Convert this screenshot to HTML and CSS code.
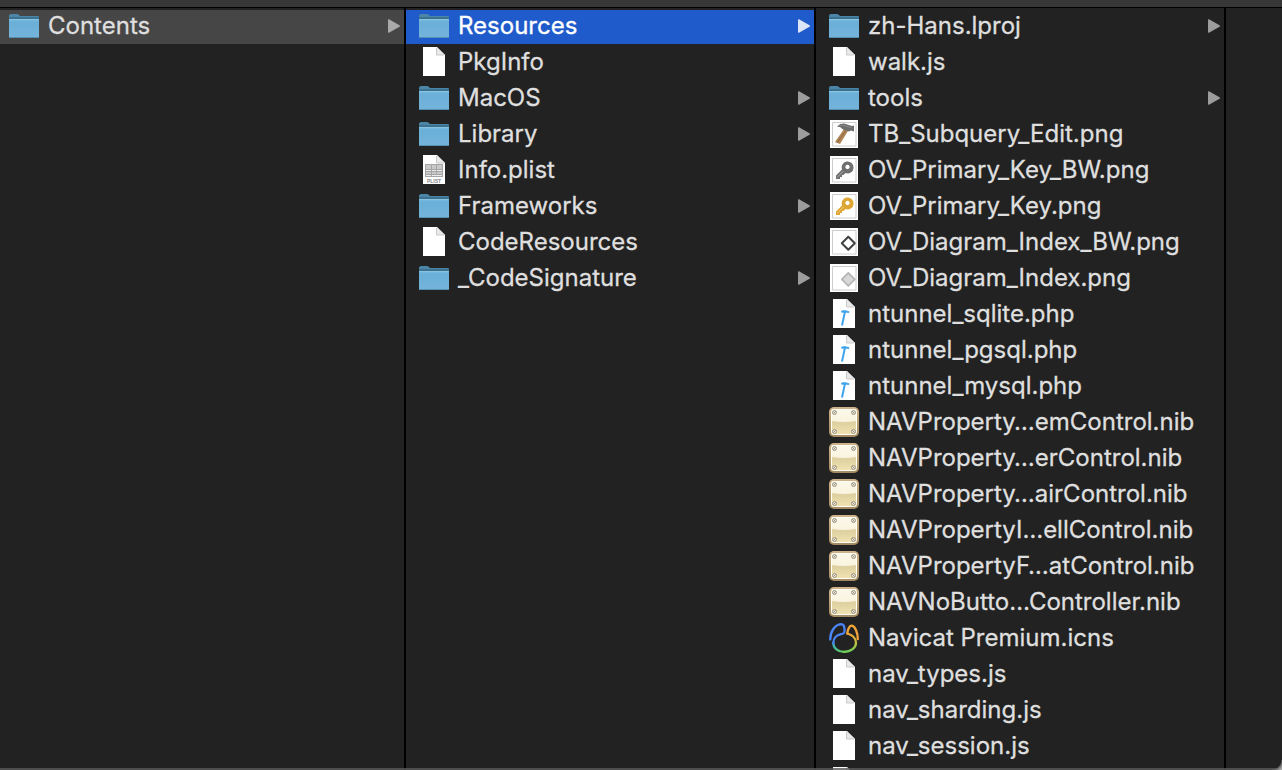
FILE: index.html
```
<!DOCTYPE html>
<html lang="en">
<head>
<meta charset="utf-8">
<title>Contents</title>
<link rel="stylesheet" href="styles.css">
</head>
<body>
<svg class="sprite" aria-hidden="true">
  <defs>
    <linearGradient id="g-folder" x1="0" y1="0" x2="0" y2="1"><stop offset="0" stop-color="#7fc0e3"/><stop offset="0.15" stop-color="#69afd8"/><stop offset="1" stop-color="#75b4da"/></linearGradient>
    <linearGradient id="g-nib" x1="0" y1="0" x2="0" y2="1"><stop offset="0" stop-color="#fffdf4"/><stop offset="0.45" stop-color="#f3ecd0"/><stop offset="0.5" stop-color="#ddcf9f"/><stop offset="1" stop-color="#f1e4b2"/></linearGradient>
    <linearGradient id="g-rim" x1="0" y1="0" x2="0" y2="1"><stop offset="0" stop-color="#d0b48a"/><stop offset="1" stop-color="#a38a62"/></linearGradient>
    <linearGradient id="g-ring" gradientUnits="userSpaceOnUse" x1="8" y1="12" x2="16" y2="29"><stop offset="0" stop-color="#4a86f7"/><stop offset="0.55" stop-color="#3fb8a0"/><stop offset="1" stop-color="#6fd058"/></linearGradient>
    <linearGradient id="g-ringr" gradientUnits="userSpaceOnUse" x1="24" y1="11" x2="20" y2="28"><stop offset="0" stop-color="#f0a63a"/><stop offset="0.4" stop-color="#c9c040"/><stop offset="1" stop-color="#6fd058"/></linearGradient>
  </defs>
  <symbol id="folder" viewBox="0 0 30 30">
    <path d="M0 26V5q0-2 2-2h6q1 0 2 1l1 1h18q1 0 1 1v20z" fill="#4b86a8"/>
    <path d="M0 7h30" stroke="#315d78"/>
    <path d="M0 8h30v18q0 1-1 1H1q-1 0-1-1z" fill="url(#g-folder)"/>
    <path d="M0 8.500h30" stroke="#86c1e0"/>
    <path d="M0 26.500h30" stroke="#538eb4"/>
  </symbol>
  <symbol id="file" viewBox="0 0 30 30">
    <path d="M4 0h14l8 8v21H4z" fill="#fff"/>
    <path d="M17.500 0v8H26z" fill="#e9e9e9"/>
    <path d="M17.500 1v7H25" fill="none" stroke="#c9c9c9"/>
  </symbol>
  <symbol id="frame" viewBox="0 0 30 30">
    <path d="M1 1h28v28H1z" fill="#fff"/>
    <path d="M3.500 3.500h23.500v23.500H3.500z" fill="none" stroke="#ccc"/>
  </symbol>
  <symbol id="hammer" viewBox="0 0 30 30">
    <use href="#frame"/>
    <path d="M15 10l4 2L11 25l-5-2z" fill="#b08556"/>
    <path d="M17 11l-9 13" stroke="#8e6a45"/>
    <path d="M8 8l3-3 4-.5 8 2.500 2-.5v6l-3-1-2 1-6-2-3-2.500z" fill="#6d6d6d"/>
    <path d="M9 7l4-1 9 2.500" fill="none" stroke="#8b8b8b"/>
  </symbol>
  <symbol id="key" viewBox="0 0 30 30">
    <path d="M17.500 6.500a6 6 0 1 1-1 11.500l-2 2h-1.500v2h-2v2H7v-3.500l6-6a6 6 0 0 1 4.500-8zM18.500 9.800a2.200 2.200 0 1 0 .01 0z" fill="currentColor" fill-rule="evenodd"/>
    <path d="M8 22.500l6.500-6.500" stroke="#fff" stroke-opacity=".45"/>
  </symbol>
  <symbol id="diamond-bw" viewBox="0 0 30 30">
    <use href="#frame"/>
    <path d="M19.300 9.800l6.500 6.500-6.500 6.500-6.500-6.500z" fill="#fff" stroke="#3f4143" stroke-width="2" stroke-linejoin="round"/>
  </symbol>
  <symbol id="diamond" viewBox="0 0 30 30">
    <use href="#frame"/>
    <path d="M19.300 9.800l6.500 6.500-6.500 6.500-6.500-6.500z" fill="#d8d8d8" stroke="#b5b5b5" stroke-width="1.700" stroke-linejoin="round"/>
  </symbol>
  <symbol id="php" viewBox="0 0 30 30">
    <use href="#file"/>
    <path d="M16 12.500L13 26.500" stroke="#3fa4ee" stroke-width="2"/>
    <path d="M12 12.500q2-1.500 4-1l4 1v1.200l-4-.5-3 .2z" fill="#3fa4ee" stroke="#3fa4ee" stroke-width=".6"/>
  </symbol>
  <symbol id="nib" viewBox="0 0 30 30">
    <rect width="30" height="30" rx="5" fill="url(#g-rim)"/>
    <rect x="2" y="2" width="26" height="26" rx="3" fill="url(#g-nib)"/>
    <path d="M2.500 13q12.500 4.500 25 0v-7q0-3-3-3h-19q-3 0-3 3z" fill="#fbf7e6" fill-opacity=".75"/>
    <rect x="2.500" y="2.500" width="25" height="25" rx="3" fill="none" stroke="#fffdf5"/>
    <g fill="#e8e5dc" stroke="#958b77" stroke-width=".9"><circle cx="5.500" cy="5.500" r="2"/><circle cx="24.500" cy="5.500" r="2"/><circle cx="5.500" cy="24.500" r="2"/><circle cx="24.500" cy="24.500" r="2"/></g>
    <path d="M4.500 6.500l2-2M23.500 4.500l2 2M4.500 25.500l2-2M23.500 23.500l2 2" stroke="#827967" stroke-width=".8"/>
  </symbol>
  <symbol id="navicat" viewBox="0 0 30 30">
    <g fill="none" stroke-width="2.300" stroke-linecap="round" stroke-linejoin="round">
      <path d="M4.300 20C4.300 25 9 28.800 15 28.800" stroke="url(#g-ring)"/>
      <path d="M15 28.800c7 0 12-4 12-9 0-4.300-3.500-7.800-8.500-9.300" stroke="url(#g-ringr)"/>
      <path d="M1.200 16.500C1.200 9 5.500 1.800 12 1.200c2.500 0 3.600 2.800 3.600 6.300 0 2.500-.6 3.200-3.600 3.700-4.700.8-7.700 4.300-7.700 8.800" stroke="#4a86f7"/>
      <path d="M18.300 10.500c.3-3.500 2-7.800 4.200-7.800 3.500 0 6.300 6.800 6.300 13.500" stroke="#f0a63a"/>
    </g>
  </symbol>
  <symbol id="arrow" viewBox="0 0 12 14">
    <path d="M1 .3l10.500 5.900q1 .8 0 1.600L1 13.700q-1 .4-1-.7V1q0-1.100 1-.7z" fill="currentColor"/>
  </symbol>
</svg>
<div class="toolbar-edge"></div>
<main class="browser">
  <ul class="column column-root">
    <li><a class="row row-trail" href="#"><svg class="icon"><use href="#folder"/></svg><span class="name">Contents</span><svg class="arrow"><use href="#arrow"/></svg></a></li>
  </ul>
  <ul class="column">
    <li><a class="row row-selected" href="#"><svg class="icon"><use href="#folder"/></svg><span class="name">Resources</span><svg class="arrow"><use href="#arrow"/></svg></a></li>
    <li><a class="row" href="#"><svg class="icon"><use href="#file"/></svg><span class="name">PkgInfo</span></a></li>
    <li><a class="row" href="#"><svg class="icon"><use href="#folder"/></svg><span class="name">MacOS</span><svg class="arrow"><use href="#arrow"/></svg></a></li>
    <li><a class="row" href="#"><svg class="icon"><use href="#folder"/></svg><span class="name">Library</span><svg class="arrow"><use href="#arrow"/></svg></a></li>
    <li>
      <a class="row" href="#">
        <svg class="icon" viewBox="0 0 30 30">
          <use href="#file"/>
          <path d="M6 9h18v13H6z" fill="#a5a5a5"/>
          <path d="M7 11h5M13 11h4M18 11h5M7 13h5M13 13h4M18 13h5M7 15.500h5M13 15.500h4M18 15.500h5M7 18h5M13 18h4M18 18h5M7 20.500h5M13 20.500h10" stroke="#ececec"/>
          <text x="15" y="28" text-anchor="middle" class="plist-tag">PLIST</text>
        </svg>
        <span class="name">Info.plist</span>
      </a>
    </li>
    <li><a class="row" href="#"><svg class="icon"><use href="#folder"/></svg><span class="name">Frameworks</span><svg class="arrow"><use href="#arrow"/></svg></a></li>
    <li><a class="row" href="#"><svg class="icon"><use href="#file"/></svg><span class="name">CodeResources</span></a></li>
    <li><a class="row" href="#"><svg class="icon"><use href="#folder"/></svg><span class="name">_CodeSignature</span><svg class="arrow"><use href="#arrow"/></svg></a></li>
  </ul>
  <ul class="column">
    <li><a class="row" href="#"><svg class="icon"><use href="#folder"/></svg><span class="name">zh-Hans.lproj</span><svg class="arrow"><use href="#arrow"/></svg></a></li>
    <li><a class="row" href="#"><svg class="icon"><use href="#file"/></svg><span class="name">walk.js</span></a></li>
    <li><a class="row" href="#"><svg class="icon"><use href="#folder"/></svg><span class="name">tools</span><svg class="arrow"><use href="#arrow"/></svg></a></li>
    <li><a class="row" href="#"><svg class="icon"><use href="#hammer"/></svg><span class="name">TB_Subquery_Edit.png</span></a></li>
    <li><a class="row" href="#"><svg class="icon key-gray"><use href="#frame"/><use href="#key"/></svg><span class="name">OV_Primary_Key_BW.png</span></a></li>
    <li><a class="row" href="#"><svg class="icon key-gold"><use href="#frame"/><use href="#key"/></svg><span class="name">OV_Primary_Key.png</span></a></li>
    <li><a class="row" href="#"><svg class="icon"><use href="#diamond-bw"/></svg><span class="name">OV_Diagram_Index_BW.png</span></a></li>
    <li><a class="row" href="#"><svg class="icon"><use href="#diamond"/></svg><span class="name">OV_Diagram_Index.png</span></a></li>
    <li><a class="row" href="#"><svg class="icon"><use href="#php"/></svg><span class="name">ntunnel_sqlite.php</span></a></li>
    <li><a class="row" href="#"><svg class="icon"><use href="#php"/></svg><span class="name">ntunnel_pgsql.php</span></a></li>
    <li><a class="row" href="#"><svg class="icon"><use href="#php"/></svg><span class="name">ntunnel_mysql.php</span></a></li>
    <li><a class="row" href="#"><svg class="icon"><use href="#nib"/></svg><span class="name">NAVProperty…emControl.nib</span></a></li>
    <li><a class="row" href="#"><svg class="icon"><use href="#nib"/></svg><span class="name">NAVProperty…erControl.nib</span></a></li>
    <li><a class="row" href="#"><svg class="icon"><use href="#nib"/></svg><span class="name">NAVProperty…airControl.nib</span></a></li>
    <li><a class="row" href="#"><svg class="icon"><use href="#nib"/></svg><span class="name">NAVPropertyI…ellControl.nib</span></a></li>
    <li><a class="row" href="#"><svg class="icon"><use href="#nib"/></svg><span class="name">NAVPropertyF…atControl.nib</span></a></li>
    <li><a class="row" href="#"><svg class="icon"><use href="#nib"/></svg><span class="name">NAVNoButto…Controller.nib</span></a></li>
    <li><a class="row" href="#"><svg class="icon"><use href="#navicat"/></svg><span class="name">Navicat Premium.icns</span></a></li>
    <li><a class="row" href="#"><svg class="icon"><use href="#file"/></svg><span class="name">nav_types.js</span></a></li>
    <li><a class="row" href="#"><svg class="icon"><use href="#file"/></svg><span class="name">nav_sharding.js</span></a></li>
    <li><a class="row" href="#"><svg class="icon"><use href="#file"/></svg><span class="name">nav_session.js</span></a></li>
    <li><a class="row" href="#" aria-label="Next file"><svg class="icon"><use href="#file"/></svg></a></li>
  </ul>
  <div class="column column-rest"></div>
</main>
<div class="window-edge"></div>
</body>
</html>
```
FILE: styles.css
```
body {
  margin: 0;
  height: 100vh;
  overflow: hidden;
  display: flex;
  flex-direction: column;
  background: #222;
  color: #dfdfdf;
  font: 400 24px/34px Inter, "Liberation Sans", sans-serif;
}

.sprite {
  position: absolute;
  width: 0;
  height: 0;
}

.plist-tag {
  font: 700 5px "Liberation Sans", sans-serif;
  fill: #8a8a8a;
}

.toolbar-edge {
  flex: none;
  height: 7px;
  background: #373737;
  border-bottom: 1px solid #000;
}

.browser {
  flex: 1;
  min-height: 0;
  display: grid;
  grid-template-columns: 406fr 410fr 410fr 56fr;
  grid-template-rows: 100%;
}

.column {
  margin: 0;
  padding: 2px 0 0;
  list-style: none;
  overflow: hidden;
  border-right: 2px solid #000;
  min-width: 0;
}

.column-rest {
  border-right: 0;
}

.row {
  display: flex;
  align-items: center;
  gap: 9px;
  height: 34px;
  margin-bottom: 2px;
  padding: 0 4px 0 13px;
  color: inherit;
  text-decoration: none;
}

.column-root .row {
  padding-left: 9px;
}

.row-trail {
  background: #464646;
}

.row-selected {
  background: #1f5bca;
  color: #fff;
}

.icon {
  flex: none;
  width: 30px;
  height: 30px;
  margin-bottom: 2px;
}

.key-gray {
  color: #6f6f6f;
}

.key-gold {
  color: #dda531;
}

.name {
  flex: 1;
  min-width: 0;
  padding-bottom: 2px;
  white-space: nowrap;
  -webkit-text-stroke: 0.3px currentColor;
}

.arrow {
  flex: none;
  width: 12px;
  height: 14px;
  margin-bottom: 2px;
  color: #9c9c9c;
}

.row-trail .arrow {
  color: #a9a9a9;
}

.row-selected .arrow {
  color: #dbe5f7;
}

/* Translucent bottom border of the window, drawn over the columns */
.window-edge {
  position: absolute;
  inset: auto 0 0;
  height: 2px;
  background: rgb(90 90 90 / 80%);
}

/* Rounded corner of the window, bottom right */
.window-edge::after {
  content: "";
  position: absolute;
  right: 0;
  bottom: 0;
  width: 10px;
  height: 10px;
  background: radial-gradient(circle at 0 0, transparent 9px, #666 10px, #aaa 13px);
}
```
